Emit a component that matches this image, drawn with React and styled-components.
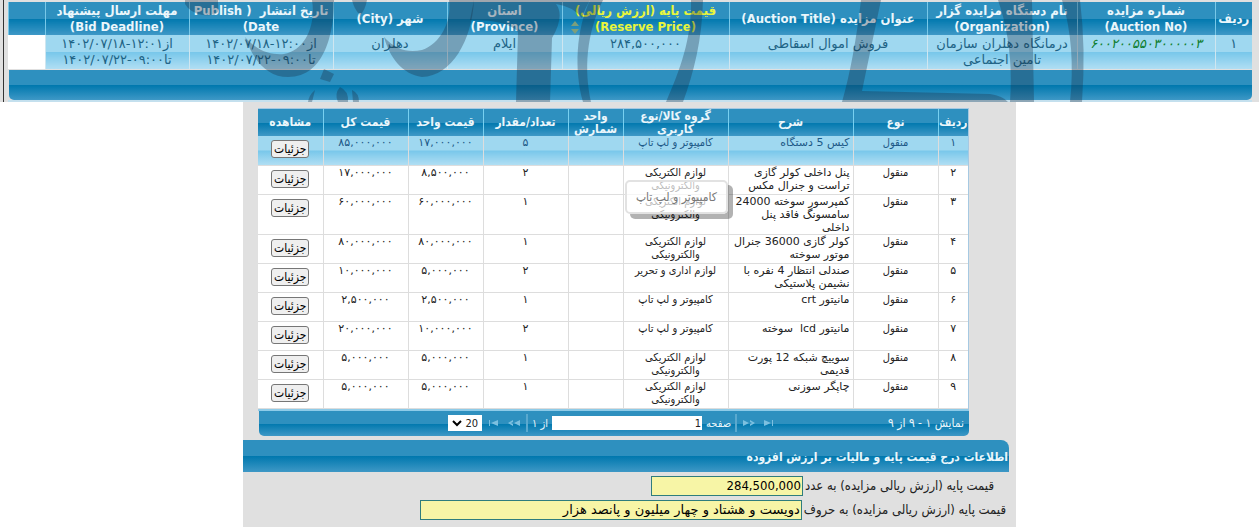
import React from 'react';
import styled, { createGlobalStyle } from 'styled-components';


const auctionCols = [
  { title: 'ردیف', width: 37 },
  { title: 'شماره مزایده', en: '(Auction No)', width: 138 },
  { title: 'نام دستگاه مزایده گزار', en: '(Organization)', width: 150 },
  { title: 'عنوان مزایده (Auction Title)', width: 198 },
  { title: 'قیمت پایه (ارزش ریالی)', en: '(Reserve Price)', width: 167, sorted: true },
  { title: 'استان', en: '(Province)', width: 115 },
  { title: 'شهر (City)', width: 114 },
  { title: 'تاریخ انتشار \u00a0( Publish', en: 'Date)', width: 144 },
  { title: 'مهلت ارسال پیشنهاد', en: '(Bid Deadline)', width: 144 },
  { title: '', width: 37 },
];

const itemCols = [
  { title: 'ردیف', width: 30 },
  { title: 'نوع', width: 85 },
  { title: 'شرح', width: 125 },
  { title: 'گروه کالا/نوع کاربری', width: 105 },
  { title: 'واحد شمارش', width: 55 },
  { title: 'تعداد/مقدار', width: 85 },
  { title: 'قیمت واحد', width: 75 },
  { title: 'قیمت کل', width: 85 },
  { title: 'مشاهده', width: 65 },
];

const items = [
  { no: '۱', desc: ['کیس 5 دستگاه'], group: ['کامپیوتر و لپ تاپ'], count: '۵', unit: '۱۷,۰۰۰,۰۰۰', total: '۸۵,۰۰۰,۰۰۰' },
  { no: '۲', desc: ['پنل داخلی کولر گازی', 'تراست و جنرال مکس'], group: ['لوازم الکتریکی', 'والکترونیکی'], count: '۲', unit: '۸,۵۰۰,۰۰۰', total: '۱۷,۰۰۰,۰۰۰' },
  { no: '۳', desc: ['کمپرسور سوخته 24000', 'سامسونگ فاقد پنل', 'داخلی'], group: ['لوازم الکتریکی', 'والکترونیکی'], count: '۱', unit: '۶۰,۰۰۰,۰۰۰', total: '۶۰,۰۰۰,۰۰۰' },
  { no: '۴', desc: ['کولر گازی 36000 جنرال', 'موتور سوخته'], group: ['لوازم الکتریکی', 'والکترونیکی'], count: '۱', unit: '۸۰,۰۰۰,۰۰۰', total: '۸۰,۰۰۰,۰۰۰' },
  { no: '۵', desc: ['صندلی انتظار 4 نفره با', 'نشیمن پلاستیکی'], group: ['لوازم اداری و تحریر'], count: '۲', unit: '۵,۰۰۰,۰۰۰', total: '۱۰,۰۰۰,۰۰۰' },
  { no: '۶', desc: ['مانیتور crt'], group: ['کامپیوتر و لپ تاپ'], count: '۱', unit: '۲,۵۰۰,۰۰۰', total: '۲,۵۰۰,۰۰۰' },
  { no: '۷', desc: ['مانیتور lcd \u00a0سوخته'], group: ['کامپیوتر و لپ تاپ'], count: '۲', unit: '۱۰,۰۰۰,۰۰۰', total: '۲۰,۰۰۰,۰۰۰' },
  { no: '۸', desc: ['سوییچ شبکه 12 پورت', 'قدیمی'], group: ['لوازم الکتریکی', 'والکترونیکی'], count: '۱', unit: '۵,۰۰۰,۰۰۰', total: '۵,۰۰۰,۰۰۰' },
  { no: '۹', desc: ['چاپگر سوزنی'], group: ['لوازم الکتریکی', 'والکترونیکی'], count: '۱', unit: '۵,۰۰۰,۰۰۰', total: '۵,۰۰۰,۰۰۰' },
];

const Lines = ({ list }) => list.map((text) => <Line key={text}>{text}</Line>);

// next / last / previous / first arrows of the pager
const arrows = {
  last: 'M1 1 L8 4 L1 7 Z M9 1 H10 V7 H9 Z',
  next: 'M0 1 L6 4 L0 7 Z M7 1 L12 4 L7 7 L7 5 L9 4 L7 3 Z',
  prev: 'M12 1 L6 4 L12 7 Z M5 1 L0 4 L5 7 L5 5 L3 4 L5 3 Z',
  first: 'M10 1 L3 4 L10 7 Z M1 1 H2 V7 H1 Z',
};

function PagerArrow({ name, label }) {
  return (
    <ArrowButton type="button" aria-label={label}>
      <svg width="12" height="8" viewBox="0 0 12 8">
        <path d={arrows[name]} fill="#7cc0e0" />
      </svg>
    </ArrowButton>
  );
}


function AuctionTable() {
  return (
    <AuctionArea>
      <AuctionGrid>
        <Table>
          <colgroup>
            {auctionCols.map((col, index) => <Col key={index} w={col.width} />)}
          </colgroup>
          <thead>
            <tr>
              {auctionCols.map((col, index) => (
                <AuctionHead key={index} sorted={col.sorted ? 1 : 0}>
                  {col.title}
                  {col.en && <Line>{col.en}</Line>}
                  {col.sorted && (
                    <SortMark width="8" height="13" viewBox="0 0 8 13">
                      <path d="M4 0 L8 5 H0 Z M4 13 L8 8 H0 Z" fill="#7d9f7b" />
                    </SortMark>
                  )}
                </AuctionHead>
              ))}
            </tr>
          </thead>
          <tbody>
            <tr>
              <AuctionCell>۱</AuctionCell>
              <AuctionCell><AuctionNo href="#auction">۶۰۰۲۰۰۵۵۰۳۰۰۰۰۰۳</AuctionNo></AuctionCell>
              <AuctionCell><Lines list={['درمانگاه دهلران سازمان', 'تامین اجتماعی']} /></AuctionCell>
              <AuctionCell>فروش اموال اسقاطی</AuctionCell>
              <AuctionCell>۲۸۴,۵۰۰,۰۰۰</AuctionCell>
              <AuctionCell>ایلام</AuctionCell>
              <AuctionCell>دهلران</AuctionCell>
              <AuctionCell><Lines list={['از۱۲:۰۰-۱۴۰۲/۰۷/۱۸', 'تا۰۹:۰۰-۱۴۰۲/۰۷/۲۲']} /></AuctionCell>
              <AuctionCell><Lines list={['از۱۲:۰۱-۱۴۰۲/۰۷/۱۸', 'تا۰۹:۰۰-۱۴۰۲/۰۷/۲۲']} /></AuctionCell>
              <EmptyCell />
            </tr>
          </tbody>
        </Table>
        <AuctionFooter />
      </AuctionGrid>

      <Watermark viewBox="0 0 1259 102" preserveAspectRatio="none" aria-hidden="true">
        <path d="M185 0 H218 V12 Q214 16 203 15 Q190 13 185 4 Z" />
        <path d="M312 0 H334 C334 30 326 77 288 77 C268 77 254 62 245 37 C258 52 272 55 284 54 C306 50 316 24 312 0 Z" />
        <path d="M352 0 H367 Q365 11 360 15 Q354 9 352 0 Z" />
        <path d="M324 69 L334 74 L330 82 L320 79 Z" />
        <path d="M315 90 L312 102 H308 Q309 95 315 90 Z M340 87 Q349 91 348 102 H338 Q334 94 340 87 Z M352 90 Q359 93 359 102 H353 Z" />
        <path d="M449 0 H474 C472 40 452 76 422 77 C402 74 390 58 384 37 C396 50 408 53 422 50 C440 44 452 22 449 0 Z" />
        <path d="M474 0 H590 Q585 8 582 18 Q572 6 556 4 Q565 16 552 38 L550 102 H516 L518 32 Q508 20 470 20 Z" />
        <path d="M590 0 H603 C586 34 584 70 591 102 H583 C574 70 576 30 590 0 Z" />
        <path d="M691 0 H703 C702 40 694 72 683 102 H666 C680 70 692 38 691 0 Z" />
        <path d="M861 0 H881 L862 91 L990 94 Q1003 96 1008 102 H842 Q854 60 861 0 Z" />
        <path d="M998 0 H1032 L1034 102 H1010 Q1014 46 998 0 Z" />
        <path d="M1062 0 H1080 Q1086 48 1082 102 H1070 Q1076 46 1062 0 Z" />
      </Watermark>
    </AuctionArea>
  );
}


function ItemTable() {
  return (
    <ItemGrid>
      <ItemFrame>
        <Table>
          <colgroup>
            {itemCols.map((col) => <Col key={col.title} w={col.width} />)}
          </colgroup>
          <thead>
            <tr>
              {itemCols.map((col) => <ItemHead key={col.title}>{col.title}</ItemHead>)}
            </tr>
          </thead>
          <tbody>
            {items.map((item, index) => (
              <ItemRow key={item.no} selected={index === 0}>
                <WideCell>{item.no}</WideCell>
                <td>منقول</td>
                <DescCell><Lines list={item.desc} /></DescCell>
                <td><Lines list={item.group} /></td>
                <td></td>
                <WideCell>{item.count}</WideCell>
                <WideCell>{item.unit}</WideCell>
                <WideCell>{item.total}</WideCell>
                <td><DetailButton type="button">جزئیات</DetailButton></td>
              </ItemRow>
            ))}
          </tbody>
        </Table>
      </ItemFrame>

      <Pager>
        <PagerInfo>نمایش ۱ - ۹ از ۹</PagerInfo>
        <PagerNav>
          <PagerArrow name="last" label="صفحه اول" />
          <PagerArrow name="next" label="صفحه قبل" />
          <Separator />
          <label htmlFor="page">صفحه</label>
          <PageInput id="page" defaultValue="1" />
          <span>از ۱</span>
          <Separator />
          <PagerArrow name="prev" label="صفحه بعد" />
          <PagerArrow name="first" label="صفحه آخر" />
          <SizeWrap>
            <SizeSelect aria-label="تعداد در صفحه" defaultValue="20">
              <option value="20">20</option>
              <option value="50">50</option>
            </SizeSelect>
            <Chevron width="10" height="7" viewBox="0 0 10 7">
              <path d="M1 1 L5 5 L9 1" fill="none" stroke="#000" strokeWidth="2" />
            </Chevron>
          </SizeWrap>
        </PagerNav>
      </Pager>

      <Tooltip role="tooltip">کامپیوتر و لپ تاپ</Tooltip>
    </ItemGrid>
  );
}


function App() {
  return (
    <Page>
      <GlobalStyle />
      <AuctionTable />
      <Panel>
        <ItemTable />
        <PanelTitle>اطلاعات درج قیمت پایه و مالیات بر ارزش افزوده</PanelTitle>
        <PriceForm>
          <Field indent={12}>
            <label htmlFor="price">قیمت پایه (ارزش ریالی مزایده) به عدد</label>
            <YellowInput id="price" w={152} readOnly value="284,500,000" />
          </Field>
          <Field indent={0}>
            <label htmlFor="words">قیمت پایه (ارزش ریالی مزایده) به حروف</label>
            <WordsInput id="words" w={382} readOnly value="دویست و هشتاد و چهار میلیون و پانصد هزار" />
          </Field>
        </PriceForm>
      </Panel>
    </Page>
  );
}


const barBlue = 'linear-gradient(to bottom, #2e90bf 0, #2e90bf 50%, #0078ae 51%, #3e98c6 100%)';
const rowBlue = 'linear-gradient(to bottom, #9fd8f0 0, #9fd8f0 49%, #78c7ea 51%, #b0def3 100%)';
const wideFont = '"DejaVu Sans", sans-serif';

const GlobalStyle = createGlobalStyle`
  * {
    box-sizing: border-box;
  }

  body {
    margin: 0;
    background: #fff;
    font-family: "DejaVu Sans Condensed", "DejaVu Sans", sans-serif;
  }

  input, select {
    font-family: inherit;
  }
`;

const Page = styled.div`
  direction: rtl;
  min-height: 100vh;
  display: flex;
  flex-direction: column;
`;

const Line = styled.div`
  white-space: nowrap;
`;

const Table = styled.table`
  width: 100%;
  table-layout: fixed;
  border-collapse: collapse;
`;

const Col = styled.col`
  width: ${(props) => props.w}px;
`;

const AuctionArea = styled.div`
  position: relative;
  padding: 2px 7px 0 8px;

  background: linear-gradient(to right, #e0e0e0 3px, #333 3px, #333 4px, #e0e0e0 4px);
`;

const AuctionGrid = styled.div`
  border-bottom: 2px solid #c4e0ee;
`;

const AuctionHead = styled.th`
  height: 33px;
  padding: 0;
  position: relative;

  font-size: 13px;
  line-height: 16px;
  color: ${(props) => props.sorted ? "#e8f53c" : "#eaf6fb"};
  white-space: nowrap;

  background: ${barBlue};
  border-left: 1px solid #78c8e8;
`;

const SortMark = styled.svg`
  position: absolute;
  left: 8px;
  bottom: 1px;
`;

const AuctionCell = styled.td`
  height: 34px;
  padding: 1px 0;

  font-family: ${wideFont};
  font-size: 13px;
  line-height: 16px;
  text-align: center;
  vertical-align: top;
  color: #1d6385;

  background: ${rowBlue};
  border-left: 1px solid #cfe6f0;
`;

const EmptyCell = styled.td`
  background: #fff;
`;

const AuctionNo = styled.a`
  color: #0e7d2e;
  font-style: italic;
  text-decoration: none;
`;

const AuctionFooter = styled.div`
  height: 30px;
  margin: 1px 0 0 1px;
  background: ${barBlue};
  border-radius: 0 0 5px 5px;
`;

const Watermark = styled.svg`
  position: absolute;
  top: 0;
  left: 0;
  width: 100%;
  height: 100%;
  pointer-events: none;

  path {
    fill: rgba(24, 45, 65, 0.32);
  }
`;

const Panel = styled.main`
  width: 100%;
  max-width: 773px;
  margin: 0 auto;
  padding-top: 6px;
  flex: 1;
  background: #e0e0e0;
`;

const ItemGrid = styled.div`
  position: relative;
  margin: 0 47px 0 15px;
  font-size: 11px;
  line-height: 13px;
`;

const ItemFrame = styled.div`
  border: 1px solid #a6c9e2;
  border-bottom: 2px solid #8ecbe8;
  background: #fff;
`;

const ItemHead = styled.th`
  height: 27px;
  padding: 0;
  font-size: 12px;
  color: #eaf6fb;
  background: ${barBlue};
  border-left: 1px solid #78d0f0;

  &:last-child {
    border-left: none;
  }
`;

const ItemRow = styled.tr`
  color: ${(props) => props.selected ? "#1d5987" : "#222"};

  td {
    height: 29px;
    padding: 0;
    text-align: center;
    vertical-align: top;

    background: ${(props) => props.selected ? rowBlue : "#fff"};
    border-left: 1px solid #ddd;
    border-bottom: 1px solid #ddd;
  }

  td:last-child {
    border-left: none;
  }
`;

const WideCell = styled.td`
  font-family: ${wideFont};
`;

const DescCell = styled.td`
  && {
    padding-right: 3px;
    font-family: ${wideFont};
    text-align: right;
  }
`;

const DetailButton = styled.button`
  width: 38px;
  height: 18px;
  margin: 4px 0 0;
  padding: 0;

  font-family: "DejaVu Sans Condensed", sans-serif;
  font-size: 12px;
  line-height: 16px;
  color: #000;

  background: #efefef;
  border: 1px solid #767676;
  border-radius: 3px;
`;

const Pager = styled.div`
  height: 25px;
  margin-left: 1px;
  padding: 0 5px;

  display: flex;
  align-items: center;

  color: #eaf6fb;
  background: ${barBlue};
  border-radius: 0 0 5px 5px;
`;

const PagerInfo = styled.div`
  flex: 1;
  font-size: 12px;
`;

const PagerNav = styled.div`
  display: flex;
  align-items: center;
  gap: 4px;
`;

const ArrowButton = styled.button`
  width: 16px;
  height: 16px;
  padding: 0;

  display: flex;
  align-items: center;
  justify-content: center;

  background: none;
  border: none;
`;

const Separator = styled.span`
  width: 2px;
  height: 18px;
  background: #5aa9cf;
`;

const PageInput = styled.input`
  width: 150px;
  height: 14px;
  padding: 0 1px;
  font-size: 11px;
  color: #222;
  background: #fff;
  border: none;
`;

const SizeWrap = styled.div`
  position: relative;
  display: flex;
  margin-left: 184px;
`;

const SizeSelect = styled.select`
  width: 34px;
  height: 16px;
  padding: 0 4px;
  appearance: none;
  font-size: 11px;
  color: #222;
  background: #fff;
  border: none;
`;

const Chevron = styled.svg`
  position: absolute;
  left: 4px;
  top: 5px;
  pointer-events: none;
`;

const Tooltip = styled.div`
  position: absolute;
  top: 72px;
  right: 241px;
  padding: 8px 9px;

  font-size: 12px;
  line-height: 14px;
  color: #777;
  white-space: nowrap;

  background: rgba(255, 255, 255, 0.7);
  border: 2px solid #e2e2e2;
  border-radius: 5px;
  box-shadow: 5px 5px 0 rgba(0, 0, 0, 0.3);
`;

const PanelTitle = styled.h2`
  height: 32px;
  margin: 4px 7px 0 0;
  padding: 0 1px 0 0;

  font-size: 12px;
  line-height: 34px;
  color: #eaf6fb;

  background: ${barBlue};
  border-radius: 0 8px 0 0;
`;

const PriceForm = styled.form`
  padding: 4px 10px 0 0;

  display: flex;
  flex-direction: column;
  gap: 4px;
`;

const Field = styled.div`
  padding-right: ${(props) => props.indent}px;

  display: flex;
  align-items: center;
  gap: 2px;

  font-size: 13px;
  line-height: 16px;
  color: #222;
`;

const YellowInput = styled.input`
  width: ${(props) => props.w}px;
  height: 20px;
  padding: 0 1px;

  font-size: 13px;
  color: #000;

  background: #f7f5a6;
  border: 1px solid #2f7d7d;
`;

const WordsInput = styled(YellowInput)`
  font-family: ${wideFont};
`;


export default App;
